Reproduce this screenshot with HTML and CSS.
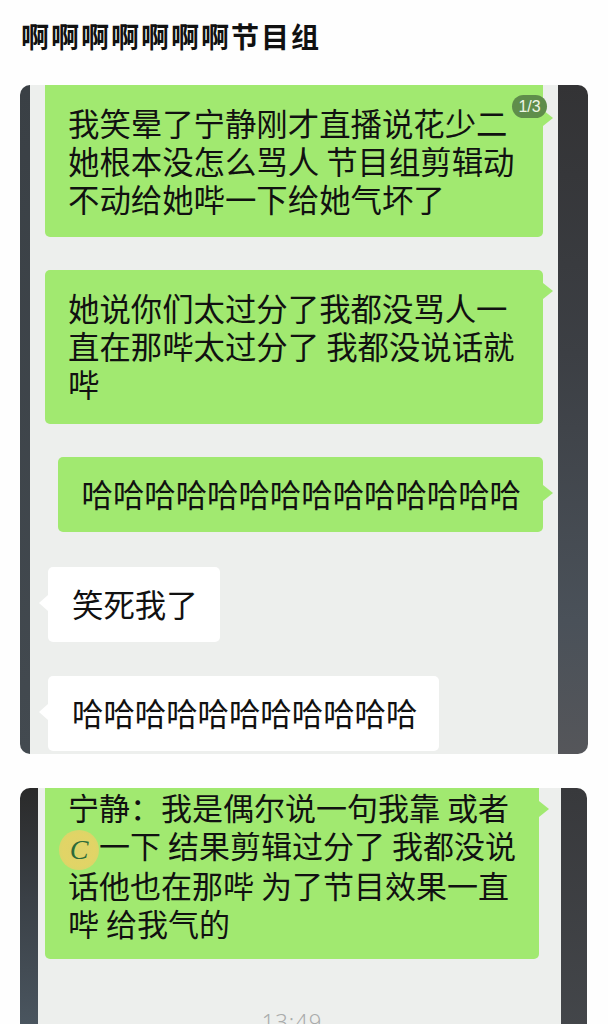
FILE: index.html
```html
<!doctype html>
<html lang="zh">
<head>
    <meta charset="UTF-8">
    <meta name="viewport" content="width=device-width,initial-scale=1"/>
    <title>啊啊啊啊啊啊啊节目组</title>
    <link rel="stylesheet" href="styles.css">
</head>
<body>
<div class="page">
    <h1 class="title">啊啊啊啊啊啊啊节目组</h1>

    <div class="card card-1">
        <div class="bezel bezel-left"></div>
        <div class="screen">
            <div class="row row-right">
                <div class="bubble bubble-green bubble-first tail-right">
                    我笑晕了宁静刚才直播说花少二她根本没怎么骂人 节目组剪辑动不动给她哔一下给她气坏了
                    <span class="badge">1/3</span>
                </div>
            </div>
            <div class="row row-right">
                <div class="bubble bubble-green bubble-tall tail-right tail-high">
                    她说你们太过分了我都没骂人一直在那哔太过分了 我都没说话就哔
                </div>
            </div>
            <div class="row row-right">
                <div class="bubble bubble-green tail-right">哈哈哈哈哈哈哈哈哈哈哈哈哈哈</div>
            </div>
            <div class="row row-left row-first-left">
                <div class="bubble bubble-white tail-left">笑死我了</div>
            </div>
            <div class="row row-left">
                <div class="bubble bubble-white tail-left">哈哈哈哈哈哈哈哈哈哈哈</div>
            </div>
        </div>
        <div class="bezel bezel-right"></div>
    </div>

    <div class="card card-2">
        <div class="bezel bezel-left"></div>
        <div class="screen">
            <div class="row row-right">
                <div class="bubble bubble-green bubble-clip tail-right tail-high">
                    宁静：我是偶尔说一句我靠 或者<span class="emoji">C</span>一下 结果剪辑过分了 我都没说话他也在那哔 为了节目效果一直哔 给我气的
                </div>
            </div>
            <div class="time">13:49</div>
        </div>
        <div class="bezel bezel-right"></div>
    </div>
</div>
</body>
</html>
```

FILE: styles.css
```css
* {
    padding: 0;
    margin: 0;
    box-sizing: border-box;
}

body {
    background: #fefefe;
    color: #111;
    font-family: "Noto Sans CJK SC", "Noto Sans", sans-serif;
}

.page {
    padding: 18px 20px 0;
}

.title {
    font-size: 28px;
    line-height: 36px;
    font-weight: 700;
    letter-spacing: 2px;
    color: #111;
    margin: 0 0 31px 1px;
}

/* chat screenshot cards */
.card {
    display: flex;
    border-radius: 10px;
    overflow: hidden;
}

.card-1 {
    width: 568px;
}

.card-2 {
    width: 567px;
    margin-top: 34px;
}

.bezel {
    flex: none;
}

.card-1 .bezel-left {
    width: 10px;
    background: linear-gradient(#3a4045, #434a50);
}

.card-1 .bezel-right {
    width: 30px;
    background: linear-gradient(#333335 0%, #3c3f44 40%, #4a5159 80%, #55565a 100%);
}

.card-2 .bezel-left {
    width: 18px;
    background: linear-gradient(#2a2a2a 0%, #3a4046 40%, #4f5c67 100%);
}

.card-2 .bezel-right {
    width: 26px;
    background: linear-gradient(#38393c, #45484c);
}

.screen {
    flex: 1;
    background: #edefed;
    padding-bottom: 3px;
}

.card-1 .screen {
    padding-left: 15px;
    padding-right: 15px;
}

.card-2 .screen {
    padding-left: 7px;
    padding-right: 22px;
    padding-bottom: 30px;
}

.row {
    display: flex;
    margin-top: 33px;
}

.row:first-child {
    margin-top: 0;
}

.row-right {
    justify-content: flex-end;
}

.row-left {
    justify-content: flex-start;
    padding-left: 3px;
    margin-top: 34px;
}

.row-first-left {
    margin-top: 35px;
}

.bubble {
    position: relative;
    font-size: 31.4px;
    line-height: 38px;
    padding: 18px 22px 19px 24px;
    border-radius: 5px;
}

.bubble-first {
    padding-top: 19px;
    padding-left: 23px;
    border-radius: 0 0 5px 5px;
}

.bubble-tall {
    padding-top: 19px;
    padding-bottom: 21px;
    padding-left: 23px;
}

.bubble-clip {
    font-size: 31px;
    padding: 0 20px 17px 23px;
    border-radius: 0 0 5px 5px;
}

.bubble-green {
    background: #a1e970;
}

.bubble-white {
    background: #fff;
}

.bubble::after {
    content: "";
    position: absolute;
    top: 28px;
    border-top: 8px solid transparent;
    border-bottom: 8px solid transparent;
}

.tail-right::after {
    right: -10px;
    border-left: 10px solid #a1e970;
}

.tail-left::after {
    left: -9px;
    border-right: 9px solid #fff;
}

.bubble-first::after {
    top: 25px;
}

.tail-high::after {
    top: 13px;
}

.badge {
    position: absolute;
    top: 10px;
    right: -4px;
    width: 35px;
    height: 23px;
    border-radius: 12px;
    background: #5f8d4b;
    color: #eef6e6;
    font-family: "Liberation Sans", sans-serif;
    font-size: 16px;
    line-height: 23px;
    text-align: center;
    z-index: 1;
}

.emoji {
    display: inline-block;
    width: 40px;
    height: 40px;
    margin: -4px 0 -4px -9px;
    border-radius: 50%;
    background: radial-gradient(circle, #ddd36a 0%, #e2d466 55%, #cfd86c 100%);
    color: #2c6a3a;
    font-family: "Liberation Serif", serif;
    font-style: italic;
    font-size: 28px;
    line-height: 40px;
    text-align: center;
    vertical-align: middle;
}

.time {
    margin-top: 48px;
    text-align: center;
    font-family: "Noto Sans", sans-serif;
    font-weight: 300;
    font-size: 22px;
    line-height: 28px;
    color: #a9abab;
    letter-spacing: 1px;
}
```
